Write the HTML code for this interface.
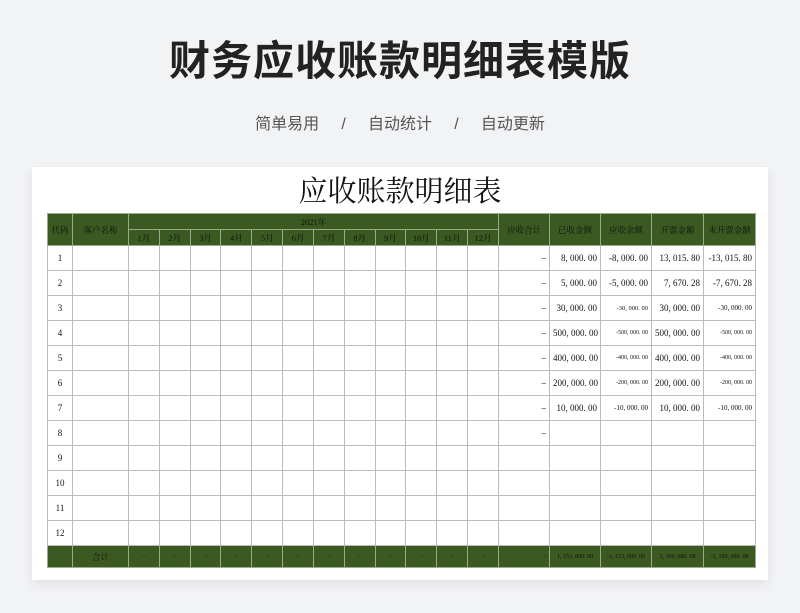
<!DOCTYPE html>
<html><head><meta charset="utf-8"><style>
*{margin:0;padding:0;box-sizing:border-box}
body{width:800px;height:613px;background:#f2f3f5;font-family:"Liberation Sans","Noto Sans CJK SC",sans-serif;position:relative;overflow:hidden}
.h1{position:absolute;top:34px;left:0;width:800px;text-align:center;font-size:41px;font-weight:bold;color:#222;letter-spacing:1px;line-height:54px}
.sub{position:absolute;top:113px;left:0;width:800px;text-align:center;font-size:16px;color:#555;line-height:24px}
.card{position:absolute;left:32px;top:167px;width:736px;height:413px;background:#fff;box-shadow:0 4px 10px rgba(0,0,0,.08)}
.t2{position:absolute;top:172px;left:0;width:800px;text-align:center;font-family:"Liberation Serif","Noto Serif CJK SC",serif;font-size:29px;color:#111;line-height:40px}
table{position:absolute;left:47px;top:213px;width:708px;border-collapse:collapse;table-layout:fixed;font-family:"Liberation Serif","Noto Serif CJK SC",serif;font-size:9px;color:#111}
td{border:1px solid #bbb;text-align:center;height:25px;padding:0 3px;white-space:nowrap;overflow:hidden}
.g td{background:#3b5a22;border-color:#9aab8a;color:#111;height:16px;font-size:8.5px}
.tot td{background:#3b5a22;border-color:#9aab8a;height:22px;font-size:6px}
.r{text-align:right}
</style></head><body>
<div class="h1">财务应收账款明细表模版</div>
<div class="sub">简单易用&nbsp;&nbsp;&nbsp;&nbsp;&nbsp;/&nbsp;&nbsp;&nbsp;&nbsp;&nbsp;自动统计&nbsp;&nbsp;&nbsp;&nbsp;&nbsp;/&nbsp;&nbsp;&nbsp;&nbsp;&nbsp;自动更新</div>
<div class="card"></div>
<div class="t2">应收账款明细表</div>
<table>
<colgroup><col style="width:25px"><col style="width:56px"><col span="12" style="width:30.83px"><col style="width:51px"><col style="width:51px"><col style="width:51px"><col style="width:52px"><col style="width:52px"></colgroup>
<tr class="g"><td rowspan="2" style="height:32px">代码</td><td rowspan="2">客户名称</td><td colspan="12">2021年</td><td rowspan="2">应收合计</td><td rowspan="2">已收金额</td><td rowspan="2">应收余额</td><td rowspan="2">开票金额</td><td rowspan="2">未开票金额</td></tr>
<tr class="g"><td>1月</td><td>2月</td><td>3月</td><td>4月</td><td>5月</td><td>6月</td><td>7月</td><td>8月</td><td>9月</td><td>10月</td><td>11月</td><td>12月</td></tr>
<tr><td>1</td><td></td><td></td><td></td><td></td><td></td><td></td><td></td><td></td><td></td><td></td><td></td><td></td><td></td><td class="r">–</td><td class="r">8, 000. 00</td><td class="r">-8, 000. 00</td><td class="r">13, 015. 80</td><td class="r">-13, 015. 80</td></tr>
<tr><td>2</td><td></td><td></td><td></td><td></td><td></td><td></td><td></td><td></td><td></td><td></td><td></td><td></td><td></td><td class="r">–</td><td class="r">5, 000. 00</td><td class="r">-5, 000. 00</td><td class="r">7, 670. 28</td><td class="r">-7, 670. 28</td></tr>
<tr><td>3</td><td></td><td></td><td></td><td></td><td></td><td></td><td></td><td></td><td></td><td></td><td></td><td></td><td></td><td class="r">–</td><td class="r">30, 000. 00</td><td class="r" style="font-size:6.5px">-30, 000. 00</td><td class="r">30, 000. 00</td><td class="r" style="font-size:7px">-30, 000. 00</td></tr>
<tr><td>4</td><td></td><td></td><td></td><td></td><td></td><td></td><td></td><td></td><td></td><td></td><td></td><td></td><td></td><td class="r">–</td><td class="r">500, 000. 00</td><td class="r" style="font-size:6px">-500, 000. 00</td><td class="r">500, 000. 00</td><td class="r" style="font-size:6px">-500, 000. 00</td></tr>
<tr><td>5</td><td></td><td></td><td></td><td></td><td></td><td></td><td></td><td></td><td></td><td></td><td></td><td></td><td></td><td class="r">–</td><td class="r">400, 000. 00</td><td class="r" style="font-size:6px">-400, 000. 00</td><td class="r">400, 000. 00</td><td class="r" style="font-size:6px">-400, 000. 00</td></tr>
<tr><td>6</td><td></td><td></td><td></td><td></td><td></td><td></td><td></td><td></td><td></td><td></td><td></td><td></td><td></td><td class="r">–</td><td class="r">200, 000. 00</td><td class="r" style="font-size:6px">-200, 000. 00</td><td class="r">200, 000. 00</td><td class="r" style="font-size:6px">-200, 000. 00</td></tr>
<tr><td>7</td><td></td><td></td><td></td><td></td><td></td><td></td><td></td><td></td><td></td><td></td><td></td><td></td><td></td><td class="r">–</td><td class="r">10, 000. 00</td><td class="r" style="font-size:7px">-10, 000. 00</td><td class="r">10, 000. 00</td><td class="r" style="font-size:7px">-10, 000. 00</td></tr>
<tr><td>8</td><td></td><td></td><td></td><td></td><td></td><td></td><td></td><td></td><td></td><td></td><td></td><td></td><td></td><td class="r">–</td><td></td><td></td><td></td><td></td></tr>
<tr><td>9</td><td></td><td></td><td></td><td></td><td></td><td></td><td></td><td></td><td></td><td></td><td></td><td></td><td></td><td></td><td></td><td></td><td></td><td></td></tr>
<tr><td>10</td><td></td><td></td><td></td><td></td><td></td><td></td><td></td><td></td><td></td><td></td><td></td><td></td><td></td><td></td><td></td><td></td><td></td><td></td></tr>
<tr><td>11</td><td></td><td></td><td></td><td></td><td></td><td></td><td></td><td></td><td></td><td></td><td></td><td></td><td></td><td></td><td></td><td></td><td></td><td></td></tr>
<tr><td>12</td><td></td><td></td><td></td><td></td><td></td><td></td><td></td><td></td><td></td><td></td><td></td><td></td><td></td><td></td><td></td><td></td><td></td><td></td></tr>
<tr class="tot"><td></td><td style="font-size:8.5px">合计</td><td>–</td><td>–</td><td>–</td><td>–</td><td>–</td><td>–</td><td>–</td><td>–</td><td>–</td><td>–</td><td>–</td><td>–</td><td class="r">–</td><td>1, 153, 000. 00</td><td>-1, 153, 000. 00</td><td>1, 160, 686. 08</td><td>-1, 160, 686. 08</td></tr>
</table>
</body></html>
